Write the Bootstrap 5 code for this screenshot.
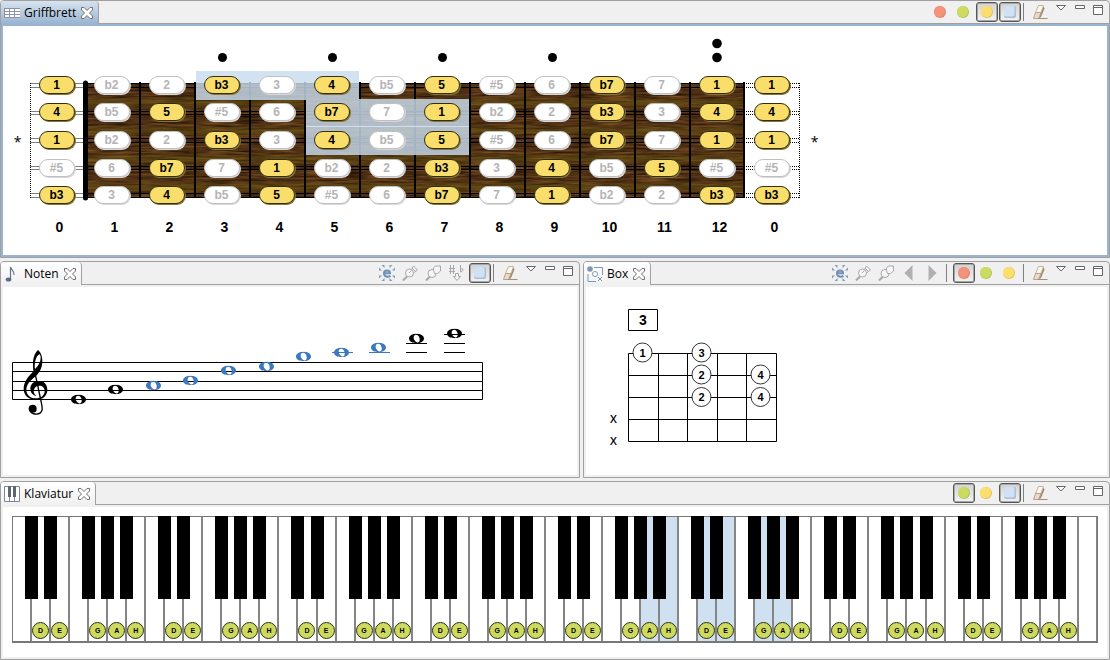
<!DOCTYPE html>
<html lang="de">
<head>
<meta charset="utf-8">
<meta name="viewport" content="width=device-width, initial-scale=1">
<title>Griffbrett</title>
<link href="https://cdn.jsdelivr.net/npm/bootstrap@5.3.0/dist/css/bootstrap.min.css" rel="stylesheet">
<style>
body{background:#f0f0f0;font-family:"Open Sans","Noto Sans",sans-serif;font-size:12px;color:#000}
.workbench{display:grid;min-height:100vh;grid-template-rows:258fr 217fr 179fr;gap:3px}
.split{display:grid;grid-template-columns:580fr 527fr;gap:3px}
.view{display:flex;flex-direction:column;min-width:0;border:1px solid #a0a0a0;border-radius:4px 4px 0 0;background:#f0f0f0;overflow:hidden}
.view-head{height:23px;border-bottom:1px solid #a0a0a0}
.view-tab{height:23px;padding:0 5px 0 3px;border-right:1px solid #a0a0a0;border-radius:0 4px 0 0;background:linear-gradient(#fff,#f0f0f0);white-space:nowrap;margin-bottom:-1px}
.tab-name{margin:0 5px 0 4px;font-size:12px;font-weight:400}
.view-body{flex:1;border:2px solid #f0f0f0;background:#fff;min-height:0}
.view.active .view-tab{background:linear-gradient(#d8e3ef,#99b4d1)}
.view.active .view-body{border-color:#99b4d1}
.tools{padding-right:2px}
.tool{width:23px;height:22px;padding:0 1px 0 0;border:0;background:none;display:flex;align-items:center;justify-content:center}
.tool.on{width:22px;height:20px;margin-left:1px;padding:0;border:1px solid #555;border-radius:3px;background:linear-gradient(#d2d2d2,#f2f2f2);box-shadow:inset 0 0 0 1px #a8a8a8}
.tool.slim{width:18px;padding:0}
.tool.mid{width:19px;padding:0}
.rule{width:1px;height:18px;background:#808080;margin:0 5px 0 2px}
.close-btn{width:12px;height:12px;padding:0;border:0;background:none;display:flex}
svg{display:block;flex:none}
.stack{display:grid;justify-content:start}
.stack>*{grid-area:1/1}
.frets{width:770px;margin:45px 0 0 26px;font-family:"Liberation Sans",Arial,sans-serif;font-weight:700}
.tones{display:grid;grid-template-columns:repeat(14,1fr);grid-template-rows:repeat(5,1fr);height:138px;place-items:center}
.tone{width:36px;height:18px;border:1px solid #c0c0c0;border-radius:9px;background:#fff;box-shadow:1px 1px 0 #d8d8d8;color:#b4b4b4;font-size:12px;line-height:16px;text-align:center}
.tone.hit{background:#f9de6c;border-color:#332d12;box-shadow:1px 1px 0 #857638;color:#000}
.fret-nos{display:grid;grid-template-columns:repeat(14,1fr);margin:8px 0 0 3px;font-size:14px;line-height:20px;text-align:center;width:770px}
.svgtext{font-family:"Liberation Sans",Arial,sans-serif;font-weight:700;text-anchor:middle}
.mute{font-family:"Open Sans","Noto Sans",sans-serif;font-weight:600;font-size:11px}
.piano{height:127px;margin:9px 9px 0 9px;border:1px solid #777;border-bottom-width:2px;display:flex}
.key{flex:1 1 0;position:relative;border-right:2px solid #858585;display:flex;align-items:flex-end;justify-content:center;padding-bottom:2px}
.key:last-child{border-right-width:1px}
.key.lit{background:#cfe0f0}
.key.sharp::after{content:"";position:absolute;z-index:1;top:-1px;right:-8px;width:13px;height:83px;background:#000}
.dot{flex:none;width:17px;height:17px;border:1px solid #2c3010;border-radius:50%;background:#cdda5f;font:700 7px/15px "Liberation Sans",Arial,sans-serif;text-align:center}
</style>
</head>
<body>
<svg width="0" height="0" class="position-absolute" aria-hidden="true">
<defs>
<symbol id="close" viewBox="0 0 12 12"><path d="M.5.5h2.500L6 3.500l3-3h2.500V3l-3 3 3 3v2.500H9l-3-3-3 3H.5V9l3-3-3-3z" fill="#fff" stroke="#707070"/></symbol>
<symbol id="red" viewBox="0 0 12 12"><circle cx="6" cy="6" r="6" fill="#e0806c"/><circle cx="5.500" cy="5.500" r="5.500" fill="#f4937b"/></symbol>
<symbol id="green" viewBox="0 0 12 12"><circle cx="6" cy="6" r="6" fill="#b4c44c"/><circle cx="5.500" cy="5.500" r="5.500" fill="#cedb62"/></symbol>
<symbol id="yellow" viewBox="0 0 12 12"><circle cx="6" cy="6" r="6" fill="#e6c055"/><circle cx="5.500" cy="5.500" r="5.500" fill="#fbdf6e"/></symbol>
<symbol id="blue" viewBox="0 0 12 12"><rect width="12" height="12" rx="2" fill="#a9bfd8"/><rect width="10.500" height="10.500" rx="2" fill="#cfe1f3"/></symbol>
<symbol id="eraser" viewBox="0 0 16 16"><path d="M6.500 1.500h5L9 8.500H3.500z" fill="#fbf7ee" stroke="#c0b49e"/><path d="M3.500 8.500H9l-2.500 6h-5z" fill="#ecd9c6" stroke="#b8a48e"/><path d="M7 14.500l4.500-12 1 2-3.500 8.500z" fill="#a08870"/><path d="M6 14.500h9.500" stroke="#a3906f"/></symbol>
<symbol id="menu" viewBox="0 0 12 7"><path d="M1.500.5h9L6 5z" fill="#fff" stroke="#666"/></symbol>
<symbol id="min" viewBox="0 0 10 4"><path d="M.5.5h9v3h-9z" fill="#fff" stroke="#666"/></symbol>
<symbol id="max" viewBox="0 0 10 10"><path d="M.5.5h9v9h-9zM.5 2.500h9" fill="#fff" stroke="#666"/></symbol>
<symbol id="sync" viewBox="0 0 16 16"><path d="M5 8.200h6C11 4.500 5 4.500 5 8.200S9 12.500 11.500 10.800" fill="none" stroke="#6f8fb4" stroke-width="2"/><path d="M2.500 0h3v3zM13.500 0h-3v3zM0 2.500v3h3zM16 2.500v3h-3zM0 13.500v-3h3zM16 13.500v-3h-3zM2.500 16h3v-3zM13.500 16h-3v-3z" fill="#7f9cbb"/></symbol>
<symbol id="pin" viewBox="0 0 16 16"><path d="M1 15.500l4-4" stroke="#a8a8a8" stroke-width="2"/><path d="M9.500 4.500l2-3.500 4 4-3.500 2.500" fill="#f6f6f6" stroke="#a8a8a8"/><circle cx="7.500" cy="8" r="4" fill="#f6f6f6" stroke="#a8a8a8"/><path d="M7 8l2.500-2.500M10 3l4 4" stroke="#a8a8a8"/></symbol>
<symbol id="pin2" viewBox="0 0 16 16"><path d="M1 15.500l4-4" stroke="#a8a8a8" stroke-width="2"/><circle cx="7" cy="8.500" r="4" fill="#f6f6f6" stroke="#a8a8a8"/><path d="M8.500 5.500V3l2-2h5v5l-3 2.500h-3z" fill="#f6f6f6" stroke="#a8a8a8"/></symbol>
<symbol id="accid" viewBox="0 0 16 16"><path d="M2.500 0v9M5.500 0v9M1 3.500h6M1 6.500h6M12.500 0v7M12.500 4q3-1 2.500 1-1 2-2.500 2" fill="none" stroke="#a8a8a8"/><path d="M7.500 8.500h3v3h2L9 15.500 5.500 11.500h2z" fill="#f4f4f4" stroke="#a8a8a8"/></symbol>
<symbol id="prev" viewBox="0 0 10 16"><path d="M8.500 0v16L.5 8z" fill="#b0b0b0"/></symbol>
<symbol id="next" viewBox="0 0 10 16"><path d="M1.500 0v16l8-8z" fill="#b0b0b0"/></symbol>
<symbol id="whole" viewBox="-8 -5 16 10"><path fill-rule="evenodd" d="M-7.500 0C-7.500-3-4-4.700 0-4.700S7.500-3 7.500 0 4 4.700 0 4.700-7.500 3-7.500 0zM-2.800-1.500C-3.300 1-.6 4.200 1.400 3.900S3.600.7 2.700-1.300C1.300-4.600-2.300-4.400-2.800-1.500z"/></symbol>
</defs>
</svg>

<main class="workbench">
<section class="view active" aria-label="Griffbrett">
  <header class="view-head d-flex justify-content-between">
    <div class="view-tab d-flex align-items-center">
      <svg width="16" height="10"><path fill="#fff" d="M0 0h16v10H0z"/><path d="M0 .5h16M0 3.500h16M0 6.500h16M0 9.500h16M5.500 0v10M10.500 0v10M.5 0v10" stroke="#8a94a4"/></svg>
      <h1 class="tab-name mb-0 lh-1">Griffbrett</h1>
      <button class="close-btn" aria-label="Schließen"><svg width="12" height="12"><use href="#close"/></svg></button>
    </div>
    <div class="tools d-flex align-items-center">
      <button class="tool" aria-label="Rot"><svg width="12" height="12"><use href="#red"/></svg></button>
      <button class="tool" aria-label="Grün"><svg width="12" height="12"><use href="#green"/></svg></button>
      <button class="tool on" aria-label="Gelb"><svg width="12" height="12"><use href="#yellow"/></svg></button>
      <button class="tool on" aria-label="Blau"><svg width="12" height="12"><use href="#blue"/></svg></button>
      <span class="rule"></span>
      <button class="tool" aria-label="Löschen"><svg width="16" height="16"><use href="#eraser"/></svg></button>
      <button class="tool slim align-items-start pt-1" aria-label="Menü"><svg width="12" height="7"><use href="#menu"/></svg></button>
      <button class="tool mid align-items-start pt-1" aria-label="Minimieren"><svg width="10" height="4"><use href="#min"/></svg></button>
      <button class="tool slim align-items-start pt-1" aria-label="Maximieren"><svg width="10" height="10"><use href="#max"/></svg></button>
    </div>
  </header>
  <div class="view-body">
    <div class="stack">
      <svg width="827" height="215" viewBox="3 26 827 215" aria-hidden="true">
        <defs>
          <filter id="grain" x="0" y="0" width="1" height="1" color-interpolation-filters="sRGB"><feTurbulence type="fractalNoise" baseFrequency=".03 .5" numOctaves="3" seed="4"/><feColorMatrix values=".5 0 0 0 .06  .34 0 0 0 .02  .16 0 0 0 0  0 0 0 0 1"/></filter>
          <linearGradient id="band" gradientUnits="userSpaceOnUse" x1="0" y1="85" x2="0" y2="113" spreadMethod="repeat"><stop offset="0" stop-color="#6b5a10" stop-opacity="0"/><stop offset=".4" stop-color="#6b5a10" stop-opacity="0"/><stop offset=".65" stop-color="#6b5a10" stop-opacity=".5"/><stop offset=".85" stop-color="#6b5a10" stop-opacity="0"/></linearGradient>
        </defs>
        <rect x="85" y="83" width="660" height="115" filter="url(#grain)"/>
        <rect x="85" y="83" width="660" height="115" fill="url(#band)"/>
        <path d="M85 83.500h660M85 87.500h660M85 111.500h660M85 114.500h660M85 138.500h660M85 142.500h660M85 166.500h660M85 169.500h660M85 193.500h660M85 197.500h660" stroke="#000"/>
        <path d="M140 82v116M195 82v116M250 82v116M305 82v116M360 82v116M415 82v116M470 82v116M525 82v116M580 82v116M635 82v116M690 82v116M744 82v116" stroke="#000" stroke-width="2"/>
        <path d="M85.500 83v115" stroke="#000" stroke-width="5" stroke-linecap="round"/>
        <path d="M30.500 83.500H84M30.500 87.500H84M30.500 111.500H84M30.500 114.500H84M30.500 138.500H84M30.500 142.500H84M30.500 166.500H84M30.500 169.500H84M30.500 193.500H84M30.500 197.500H84M30.500 83v115M746 83.500h53M746 87.500h53M746 111.500h53M746 114.500h53M746 138.500h53M746 142.500h53M746 166.500h53M746 169.500h53M746 193.500h53M746 197.500h53M799.500 83v115" stroke="#000" stroke-dasharray="1 1"/>
        <path d="M196 71h163v29H196zM306 99h163v28H306zM306 127h163v28H306z" fill="#c9dcee" fill-opacity=".82"/>
        <path d="M306 126.500h163" stroke="#cfe0f0"/>
        <circle cx="222.500" cy="57.500" r="4.500"/><circle cx="332.500" cy="57.500" r="4.500"/><circle cx="442.500" cy="57.500" r="4.500"/><circle cx="552.500" cy="57.500" r="4.500"/><circle cx="717" cy="57.500" r="4.800"/><circle cx="717" cy="43.500" r="4.800"/>
        <text x="17.500" y="147" font-size="14" text-anchor="middle">*</text><text x="814.500" y="147" font-size="14" text-anchor="middle">*</text>
      </svg>
      <div class="frets">
        <div class="tones" id="tones"></div>
        <div class="fret-nos" id="fretNos"></div>
      </div>
    </div>
  </div>
</section>

<div class="split">
<section class="view" aria-label="Noten">
  <header class="view-head d-flex justify-content-between">
    <div class="view-tab d-flex align-items-center">
      <svg width="16" height="16"><path d="M6.500 14V1c1 3 4 4 3.500 8" fill="none" stroke="#66728c" stroke-width="1.200"/><ellipse cx="4.500" cy="13.500" rx="2.800" ry="2" fill="#5d6a88"/></svg>
      <h2 class="tab-name mb-0 lh-1">Noten</h2>
      <button class="close-btn" aria-label="Schließen"><svg width="12" height="12"><use href="#close"/></svg></button>
    </div>
    <div class="tools d-flex align-items-center">
      <button class="tool" aria-label="Synchronisieren"><svg width="16" height="16"><use href="#sync"/></svg></button>
      <button class="tool" aria-label="Anheften"><svg width="16" height="16"><use href="#pin"/></svg></button>
      <button class="tool" aria-label="Ansicht anheften"><svg width="16" height="16"><use href="#pin2"/></svg></button>
      <button class="tool" aria-label="Vorzeichen"><svg width="16" height="16"><use href="#accid"/></svg></button>
      <button class="tool on" aria-label="Blau"><svg width="12" height="12"><use href="#blue"/></svg></button>
      <span class="rule"></span>
      <button class="tool" aria-label="Löschen"><svg width="16" height="16"><use href="#eraser"/></svg></button>
      <button class="tool slim align-items-start pt-1" aria-label="Menü"><svg width="12" height="7"><use href="#menu"/></svg></button>
      <button class="tool mid align-items-start pt-1" aria-label="Minimieren"><svg width="10" height="4"><use href="#min"/></svg></button>
      <button class="tool slim align-items-start pt-1" aria-label="Maximieren"><svg width="10" height="10"><use href="#max"/></svg></button>
    </div>
  </header>
  <div class="view-body">
    <svg width="490" height="140" viewBox="3 287 490 140" role="img" aria-label="Notensystem">
      <path d="M12.500 362.500h470v37h-470zM12.500 371.500h470M12.500 381.500h470M12.500 390.500h470" fill="none" stroke="#000"/>
      <g transform="translate(0 255) scale(.33333)">
        <path fill-rule="evenodd" d="M114 285C104 293 98 312 99 330c0 8 1 14 2 19C84 365 71 381 71 402c0 21 17 32 37 32 21 0 34-12 34-30 0-16-11-26-25-26-17 0-26 11-26 23 0 11 7 19 18 22-7-6-9-12-7-19 2-8 8-12 16-12 9 0 16 6 16 17 0 13-12 21-26 21-19 0-29-12-29-26 0-16 13-28 25-38 15-12 23-28 23-48 0-16-6-28-13-33zM118 298c3 1 4 5 4 11 0 13-8 24-17 33-3-14 2-39 13-44z"/>
        <path d="M102 340l21 98c3 14 5 22 3 28-3 9-12 12-20 11-8 0-14-5-16-12" fill="none" stroke="#000" stroke-width="4"/>
        <circle cx="98" cy="461" r="12"/>
      </g>
      <path d="M406 343.500h21M406 352.500h21M444 334.500h21M444 343.500h21M444 352.500h21" stroke="#000"/>
      <path d="M332 352.500h21M369 352.500h21" stroke="#3c78c0"/>
      <g id="notes"></g>
    </svg>
  </div>
</section>

<section class="view" aria-label="Box">
  <header class="view-head d-flex justify-content-between">
    <div class="view-tab d-flex align-items-center">
      <svg width="16" height="16"><path d="M7 1.500h8.500V9M1 8v7.500h8M11 11l4 4M15 11l-4 4" fill="none" stroke="#7c98b6"/><circle cx="8" cy="8" r="2.500" fill="#fff" stroke="#7c98b6"/><circle cx="3" cy="3" r="2.800" fill="#7c98b6"/></svg>
      <h2 class="tab-name mb-0 lh-1">Box</h2>
      <button class="close-btn" aria-label="Schließen"><svg width="12" height="12"><use href="#close"/></svg></button>
    </div>
    <div class="tools d-flex align-items-center">
      <button class="tool" aria-label="Synchronisieren"><svg width="16" height="16"><use href="#sync"/></svg></button>
      <button class="tool" aria-label="Anheften"><svg width="16" height="16"><use href="#pin"/></svg></button>
      <button class="tool" aria-label="Ansicht anheften"><svg width="16" height="16"><use href="#pin2"/></svg></button>
      <button class="tool" aria-label="Zurück"><svg width="10" height="16"><use href="#prev"/></svg></button>
      <button class="tool" aria-label="Weiter"><svg width="10" height="16"><use href="#next"/></svg></button>
      <span class="rule"></span>
      <button class="tool on" aria-label="Rot"><svg width="12" height="12"><use href="#red"/></svg></button>
      <button class="tool" aria-label="Grün"><svg width="12" height="12"><use href="#green"/></svg></button>
      <button class="tool" aria-label="Gelb"><svg width="12" height="12"><use href="#yellow"/></svg></button>
      <span class="rule"></span>
      <button class="tool" aria-label="Löschen"><svg width="16" height="16"><use href="#eraser"/></svg></button>
      <button class="tool slim align-items-start pt-1" aria-label="Menü"><svg width="12" height="7"><use href="#menu"/></svg></button>
      <button class="tool mid align-items-start pt-1" aria-label="Minimieren"><svg width="10" height="4"><use href="#min"/></svg></button>
      <button class="tool slim align-items-start pt-1" aria-label="Maximieren"><svg width="10" height="10"><use href="#max"/></svg></button>
    </div>
  </header>
  <div class="view-body">
    <svg width="200" height="165" viewBox="586 287 200 165" class="svgtext" role="img" aria-label="Griffbox">
      <path d="M628.500 309.500h29v21h-29zM628.500 353.500h148v88h-148zM658.500 353v88M687.500 353v88M717.500 353v88M746.500 353v88M628 375.500h148M628 397.500h148M628 419.500h148" fill="none" stroke="#000"/>
      <text x="643" y="325" font-size="14">3</text>
      <g class="mute"><text x="613.500" y="423">X</text><text x="613.500" y="445">X</text></g>
      <g id="fingers" font-size="11"></g>
    </svg>
  </div>
</section>
</div>

<section class="view" aria-label="Klaviatur">
  <header class="view-head d-flex justify-content-between">
    <div class="view-tab d-flex align-items-center">
      <svg width="16" height="16"><path d="M.5.5h15v15H.5zM5.500 0v15M10.500 0v15" fill="#fff" stroke="#7c8694"/><path d="M4 0h3v11H4zM9 0h3v11H9z" fill="#5c6674"/></svg>
      <h2 class="tab-name mb-0 lh-1">Klaviatur</h2>
      <button class="close-btn" aria-label="Schließen"><svg width="12" height="12"><use href="#close"/></svg></button>
    </div>
    <div class="tools d-flex align-items-center">
      <button class="tool on" aria-label="Grün"><svg width="12" height="12"><use href="#green"/></svg></button>
      <button class="tool" aria-label="Gelb"><svg width="12" height="12"><use href="#yellow"/></svg></button>
      <button class="tool on" aria-label="Blau"><svg width="12" height="12"><use href="#blue"/></svg></button>
      <span class="rule"></span>
      <button class="tool" aria-label="Löschen"><svg width="16" height="16"><use href="#eraser"/></svg></button>
      <button class="tool slim align-items-start pt-1" aria-label="Menü"><svg width="12" height="7"><use href="#menu"/></svg></button>
      <button class="tool mid align-items-start pt-1" aria-label="Minimieren"><svg width="10" height="4"><use href="#min"/></svg></button>
      <button class="tool slim align-items-start pt-1" aria-label="Maximieren"><svg width="10" height="10"><use href="#max"/></svg></button>
    </div>
  </header>
  <div class="view-body"><div class="piano" id="piano"></div></div>
</section>
</main>

<script src="https://cdn.jsdelivr.net/npm/bootstrap@5.3.0/dist/js/bootstrap.bundle.min.js"></script>
<script>
// Intervals per string, from the open string to fret 12 and the closing open column
const strings = [
  '1 b2 2 b3 3 4 b5 5 #5 6 b7 7 1 1',
  '4 b5 5 #5 6 b7 7 1 b2 2 b3 3 4 4',
  '1 b2 2 b3 3 4 b5 5 #5 6 b7 7 1 1',
  '#5 6 b7 7 1 b2 2 b3 3 4 b5 5 #5 #5',
  'b3 3 4 b5 5 #5 6 b7 7 1 b2 2 b3 b3'
];
const scale = ['1', 'b3', '4', '5', 'b7'];
document.getElementById('tones').innerHTML = strings.map(s => s.split(' ').map(t =>
  `<span class="tone${scale.includes(t) ? ' hit' : ''}">${t}</span>`).join('')).join('');
document.getElementById('fretNos').innerHTML =
  [0,1,2,3,4,5,6,7,8,9,10,11,12,0].map(n => `<span>${n}</span>`).join('');

// Whole notes: x, y, selected
document.getElementById('notes').innerHTML = [
  [78,399.5,0],[115,389.5,0],[153,385.5,1],[190,380.5,1],[228,370.5,1],[266,366.5,1],
  [303,356.5,1],[341,352.5,1],[378,347.5,1],[416,338.5,0],[454,333.5,0]
].map(([x, y, sel]) => `<use href="#whole" x="${x - 7.5}" y="${y - 5}" width="16" height="10" fill="${sel ? '#3c78c0' : '#000'}"/>`).join('');

// Finger positions: x, y, finger
document.getElementById('fingers').innerHTML = [
  [642.5,352.5,1],[701.5,352.5,3],[701.5,374.5,2],[701.5,397,2],[760.5,374.5,4],[760.5,397,4]
].map(([x, y, f]) => `<circle cx="${x}" cy="${y}" r="9.5" fill="#fff" stroke="#333"/><text x="${x}" y="${y + 4}">${f}</text>`).join('');

// Eight octaves plus the top C
const lit = [33, 34, 36, 37, 39, 40];
const names = ['', 'D', 'E', '', 'G', 'A', 'H'];
let keys = '';
for (let i = 0; i < 57; i++) {
  const n = i % 7;
  const sharp = i < 56 && n !== 2 && n !== 6;
  keys += `<div class="key${sharp ? ' sharp' : ''}${lit.includes(i) ? ' lit' : ''}">${names[n] ? `<span class="dot">${names[n]}</span>` : ''}</div>`;
}
document.getElementById('piano').innerHTML = keys;
</script>
</body>
</html>
